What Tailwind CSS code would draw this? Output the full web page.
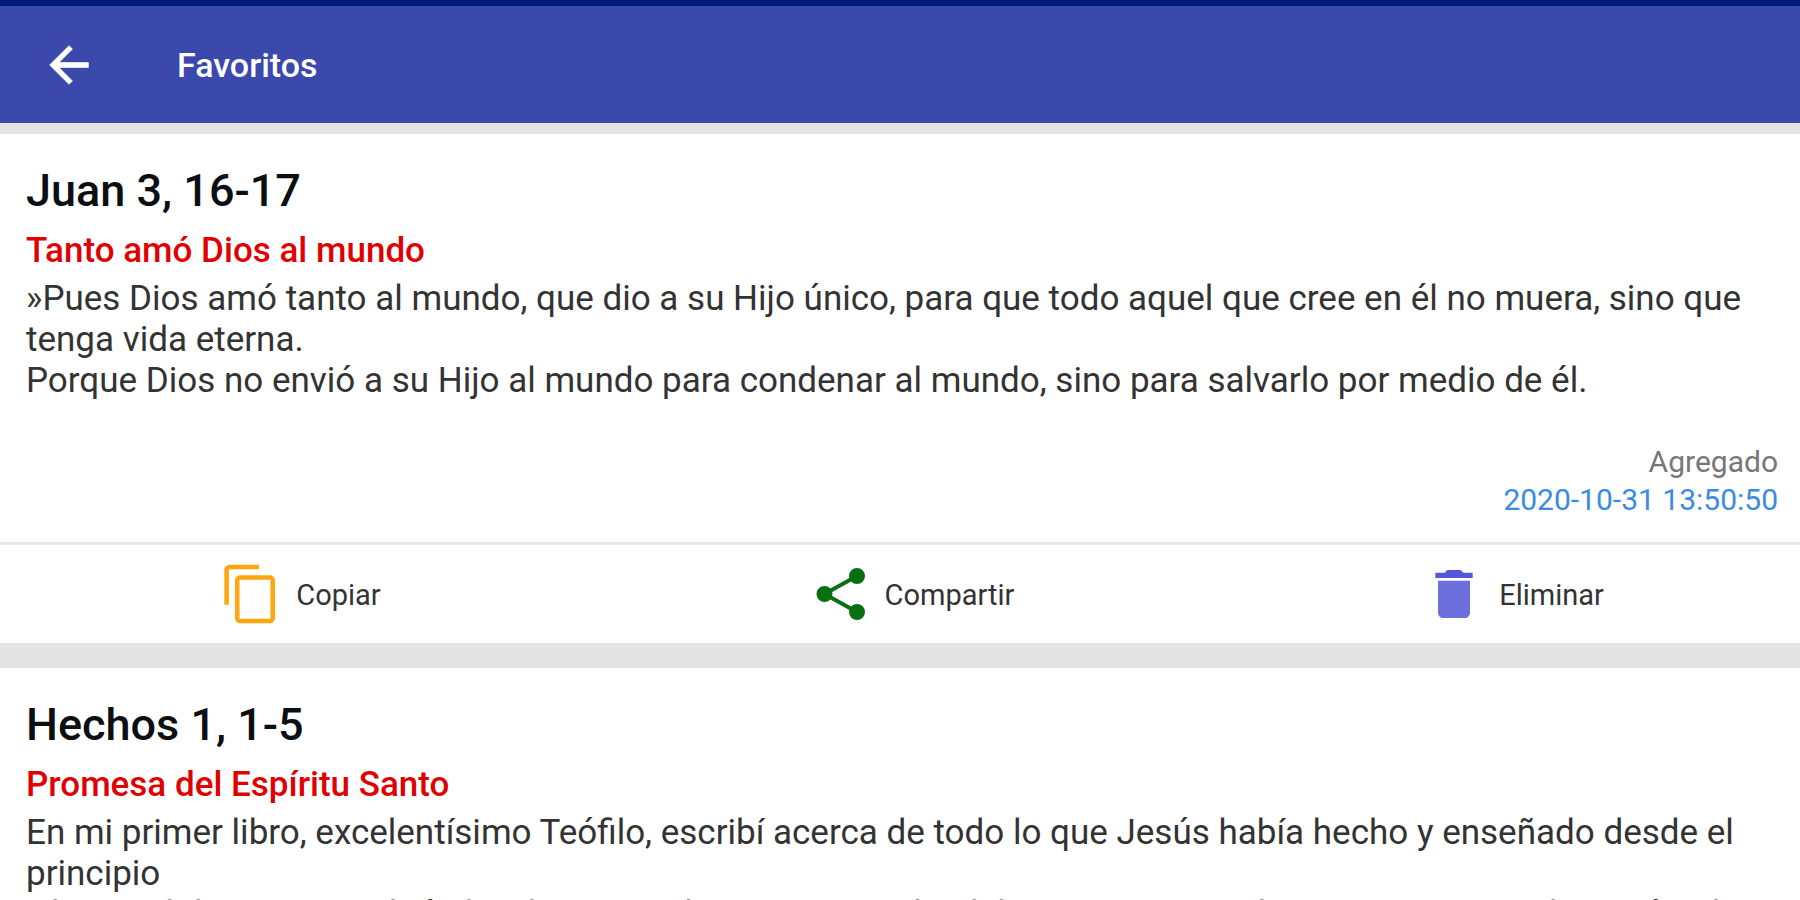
<!DOCTYPE html>
<html lang="es">

<head>
    <meta charset="UTF-8">
    <meta name="viewport" content="width=device-width, initial-scale=1.0">
    <title>Favoritos</title>
    <script src="https://cdn.jsdelivr.net/npm/@tailwindcss/browser@4"></script>
</head>

<body class="h-screen overflow-hidden bg-[#e4e4e4] font-['Roboto',sans-serif] text-[#333333]">
    <header class="flex h-[123px] items-center gap-[79px] border-t-6 border-[#001b75] bg-[#3a49ab] px-[40px] text-white">
        <button aria-label="Volver" class="cursor-pointer">
            <svg class="size-[58px]" viewBox="0 0 24 24" fill="currentColor" stroke="currentColor" stroke-width=".3">
                <path d="M20 11H7.83l5.59-5.59L12 4l-8 8 8 8 1.41-1.41L7.83 13H20v-2z" />
            </svg>
        </button>
        <h1 class="text-[34px] leading-[40px] font-medium">Favoritos</h1>
    </header>

    <main class="flex flex-col gap-[25px] pt-[11px]">
        <article class="bg-white">
            <div class="px-[26px] pt-[30px] pb-[20px]">
                <h2 class="text-[45px] leading-[54px] font-medium text-[#0b0f12]">Juan 3, 16-17</h2>
                <h3 class="mt-[13px] text-[35px] leading-[40px] font-medium text-[#e00000]">Tanto amó Dios al mundo</h3>
                <p class="mt-[7px] text-[35px] leading-[41px]">»Pues Dios amó tanto al mundo, que dio a su Hijo único, para que todo aquel que cree en él no muera, sino que tenga vida eterna.<br>Porque Dios no envió a su Hijo al mundo para condenar al mundo, sino para salvarlo por medio de él.</p>
            </div>
            <div class="px-[22px] pt-[22px] pb-[23px] text-right text-[30px] leading-[38px]">
                <p class="text-[#777777]">Agregado</p>
                <time class="block text-[#3b8be0]">2020-10-31 13:50:50</time>
            </div>
            <div class="grid grid-cols-[300fr_313fr_287fr] border-t-3 border-[#e8e8e8]">
                <button class="flex h-[98px] cursor-pointer items-center justify-center gap-[13px] text-[29px]">
                    <svg class="size-[64px]" viewBox="0 0 24 24" fill="#ffa510">
                        <path d="M15 1H4c-1.100 0-2 .9-2 2v13h1.700V2.700H15V1zm4 4H8c-1.100 0-2 .9-2 2v14c0 1.100.9 2 2 2h11c1.100 0 2-.9 2-2V7c0-1.100-.9-2-2-2zm.3 16.300H7.700V6.700h11.600v14.600z" />
                    </svg>
                    <span class="pt-1">Copiar</span>
                </button>
                <button class="flex h-[98px] cursor-pointer items-center justify-center gap-[13px] text-[29px]">
                    <svg class="size-[60px]" viewBox="0 0 24 24" fill="#087010" stroke="#087010">
                        <path d="M18 4.800L5 12l13 7.200" fill="none" stroke-width="1.600" />
                        <circle cx="18" cy="4.800" r="2.700" />
                        <circle cx="5" cy="12" r="2.700" />
                        <circle cx="18" cy="19.200" r="2.700" />
                    </svg>
                    <span class="pt-1">Compartir</span>
                </button>
                <button class="flex h-[98px] cursor-pointer items-center justify-center gap-[13px] text-[29px]">
                    <svg class="size-[64px]" viewBox="0 0 24 24">
                        <path d="M6 19c0 1.100.9 2 2 2h8c1.100 0 2-.9 2-2V7H6v12z" fill="#6d70dc" />
                        <path d="M19 4h-3.500l-1-1h-5l-1 1H5v2h14V4z" fill="#5557d8" />
                    </svg>
                    <span class="pt-1">Eliminar</span>
                </button>
            </div>
        </article>

        <article class="bg-white">
            <div class="px-[26px] pt-[30px] pb-[20px]">
                <h2 class="text-[45px] leading-[54px] font-medium text-[#0b0f12]">Hechos 1, 1-5</h2>
                <h3 class="mt-[13px] text-[35px] leading-[40px] font-medium text-[#e00000]">Promesa del Espíritu Santo</h3>
                <p class="mt-[7px] text-[35px] leading-[41px]">En mi primer libro, excelentísimo Teófilo, escribí acerca de todo lo que Jesús había hecho y enseñado desde el principio<br>y hasta el día en que subió al cielo. Antes de irse, por medio del Espíritu Santo, dio instrucciones a los apóstoles que había escogido respecto a lo que debían hacer.</p>
            </div>
        </article>
    </main>
</body>

</html>
